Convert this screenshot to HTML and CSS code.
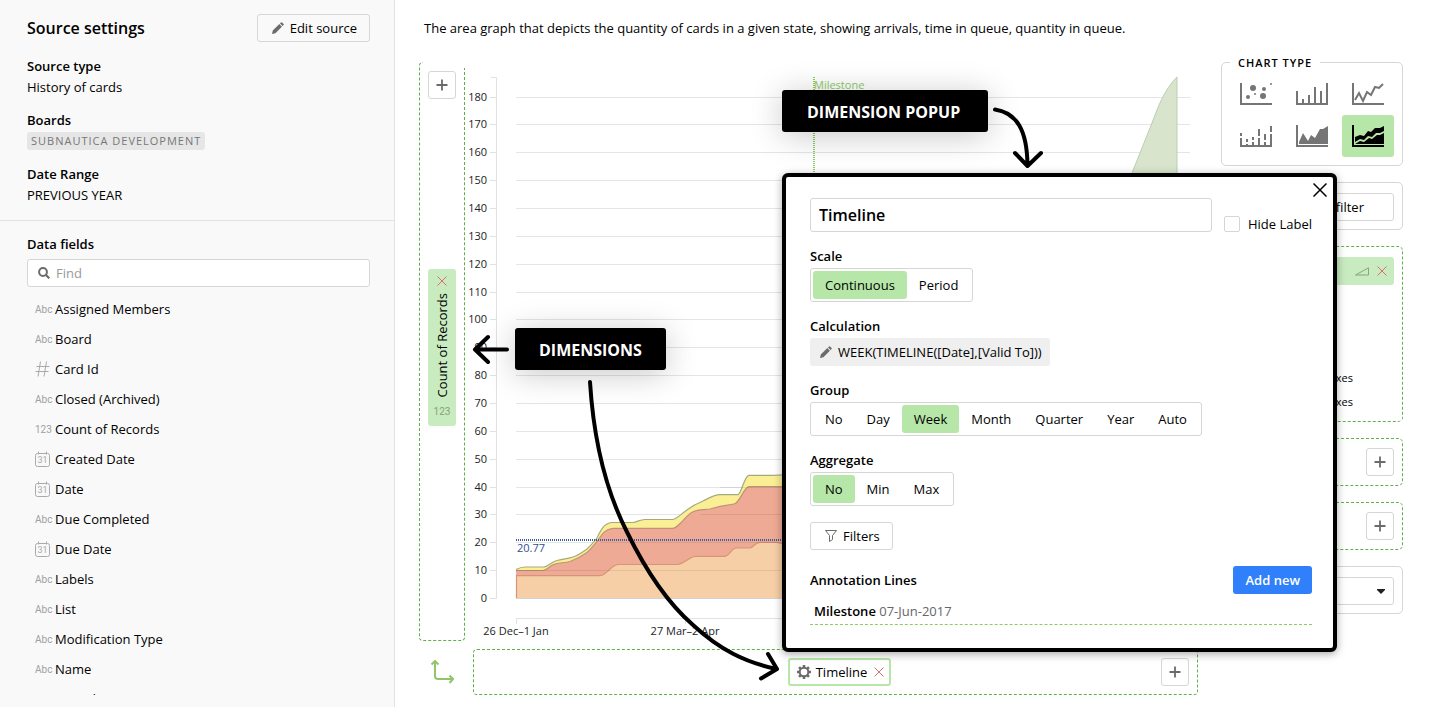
FILE: index.html
```html
<!DOCTYPE html>
<html lang="en">
<head>
<meta charset="utf-8">
<title>Chart editor</title>
<link rel="stylesheet" href="styles.css">
</head>
<body>
<svg class="sprite" aria-hidden="true">
  <symbol id="plus" viewBox="0 0 12 12"><path d="M6 0.500V11.500M0.500 6H11.500" fill="none" stroke="#6b6b6b" stroke-width="1.800"/></symbol>
  <symbol id="cross" viewBox="0 0 10 10"><path d="M0.500 0.500L9.500 9.500M9.500 0.500L0.500 9.500" fill="none" stroke="currentColor" stroke-width="1"/></symbol>
  <symbol id="pencil" viewBox="0 0 12 12"><path d="M0 12L0.800 8.600L7.300 2.100L9.900 4.700L3.400 11.200ZM8 1.400L9 0.400Q9.500 0 10 0.400L11.600 2Q12 2.500 11.600 3L10.600 4Z" fill="#6b6b6b"/></symbol>
  <symbol id="calendar" viewBox="0 0 15 16"><path d="M2.500 2.500H12.500Q14.500 2.500 14.500 4.500V13.500Q14.500 15.500 12.500 15.500H2.500Q0.500 15.500 0.500 13.500V4.500Q0.500 2.500 2.500 2.500ZM3.500 0.500V3.500M11.500 0.500V3.500" fill="none" stroke="#aaa"/><text x="7.500" y="12" text-anchor="middle" class="calendar-day">31</text></symbol>
  <symbol id="hash" viewBox="0 0 15 16"><path d="M5.500 0.500L3 15.500M11.500 0.500L9 15.500M1.500 5.500H14.500M0.500 10.500H13.500" fill="none" stroke="#aaa"/></symbol>
</svg>
<div class="app">
  <aside class="sidebar">
    <section class="source">
      <header class="source-head">
        <h1 class="title">Source settings</h1>
        <button class="btn" type="button"><svg class="i12"><use href="#pencil"/></svg>Edit source</button>
      </header>
      <dl class="facts">
        <dt>Source type</dt><dd>History of cards</dd>
        <dt>Boards</dt><dd><span class="tag">SUBNAUTICA DEVELOPMENT</span></dd>
        <dt>Date Range</dt><dd>PREVIOUS YEAR</dd>
      </dl>
    </section>
    <section class="fields">
      <label class="label-fields" for="find">Data fields</label>
      <div class="search">
        <svg class="i12" viewBox="0 0 12 12"><circle cx="5" cy="5" r="3.900" fill="none" stroke="#6b6b6b" stroke-width="2"/><path d="M8 8L11.300 11.300" stroke="#6b6b6b" stroke-width="2.200"/></svg>
        <input id="find" type="text" placeholder="Find">
      </div>
      <ul class="list">
        <li><span class="kind">Abc</span>Assigned Members</li>
        <li><span class="kind">Abc</span>Board</li>
        <li><svg class="kind"><use href="#hash"/></svg>Card Id</li>
        <li><span class="kind">Abc</span>Closed (Archived)</li>
        <li><span class="kind">123</span>Count of Records</li>
        <li><svg class="kind"><use href="#calendar"/></svg>Created Date</li>
        <li><svg class="kind"><use href="#calendar"/></svg>Date</li>
        <li><span class="kind">Abc</span>Due Completed</li>
        <li><svg class="kind"><use href="#calendar"/></svg>Due Date</li>
        <li><span class="kind">Abc</span>Labels</li>
        <li><span class="kind">Abc</span>List</li>
        <li><span class="kind">Abc</span>Modification Type</li>
        <li><span class="kind">Abc</span>Name</li>
        <li><span class="kind">Abc</span>Row Id</li>
      </ul>
    </section>
  </aside>

  <main class="main">
    <p class="description">The area graph that depicts the quantity of cards in a given state, showing arrivals, time in queue, quantity in queue.</p>
    <div class="workspace">
      <div class="canvas">
        <div class="zone zone-y">
          <button class="add" type="button" aria-label="Add Y dimension"><svg class="i12"><use href="#plus"/></svg></button>
          <div class="pill-y">
            <button class="remove" type="button" aria-label="Remove"><svg class="i10"><use href="#cross"/></svg></button>
            <span class="pill-text">Count of Records</span>
            <span class="kind">123</span>
          </div>
        </div>
        <svg class="chart" viewBox="473 62 725 579">
          <path class="grid" d="M516 97.500H1190M516 124.500H1190M516 152.500H1190M516 180.500H1190M516 208.500H1190M516 236.500H1190M516 264.500H1190M516 292.500H1190M516 319.500H1190M516 347.500H1190M516 375.500H1190M516 403.500H1190M516 431.500H1190M516 459.500H1190M516 487.500H1190M516 514.500H1190M516 542.500H1190M516 570.500H1190M516 598.500H1190"/>
          <path class="axis" d="M491 77.500H496.500V598.500H490M490 97.500H496M490 124.500H496M490 152.500H496M490 180.500H496M490 208.500H496M490 236.500H496M490 264.500H496M490 292.500H496M490 319.500H496M490 347.500H496M490 375.500H496M490 403.500H496M490 431.500H496M490 459.500H496M490 487.500H496M490 514.500H496M490 542.500H496M490 570.500H496M516.500 624V618.500H1190M685.500 618V624"/>
          <g class="ticks" text-anchor="end">
            <text x="487" y="101">180</text><text x="487" y="128">170</text><text x="487" y="156">160</text><text x="487" y="184">150</text><text x="487" y="212">140</text><text x="487" y="240">130</text><text x="487" y="268">120</text><text x="487" y="296">110</text><text x="487" y="323">100</text><text x="487" y="351">90</text><text x="487" y="379">80</text><text x="487" y="407">70</text><text x="487" y="435">60</text><text x="487" y="463">50</text><text x="487" y="491">40</text><text x="487" y="518">30</text><text x="487" y="546">20</text><text x="487" y="574">10</text><text x="487" y="602">0</text>
          </g>
          <g class="ticks" text-anchor="middle"><text x="516" y="635">26 Dec–1 Jan</text><text x="685" y="635">27 Mar–2 Apr</text></g>
          <path class="peak" d="M1105 250L1132 173L1152 123C1158 107 1164 90 1177 77V598H1105Z"/>
          <path fill="#faef94" d="M516 569.500C519 568 521 567 525 567H544C549 566 551 562 557 560.500C563 559 567 559 573 557C579 555 583 552 587 549C591 545 594 542 597 538C600 532 603 524 611 522.500H633C637 522 640 519.500 645 519.500H673C677 519 682 513 687 510C692 506 698 503 703 501C709 498 715 494.700 720 494.700H738C742 493 744 476 749 475.300H773L800 474V598H516Z"/>
          <path fill="#eeaa94" d="M516 570.500H543C548 570 550 565 555 564C560 562.500 565 563 570 561.500C577 559 582 556 587 552.500C591 549 594 545 597 541.500C601 536 604 529 613 528.300H673C677 528 679 524 682 521.700C686 517 690 513 693 511.700C698 509 704 510 710 509L720 506.300L734 504C740 503 743 488 749 486.700H800V598H516Z"/>
          <path fill="#f6cfa6" d="M516 575.700H600C607 575 611 565 618 564.500H677C684 564 689 557 695 556.300H725C729 556 732 548 736 548H750C754 547 755 542.300 760 542.300H777L800 548V598H516Z"/>
          <path class="edge" stroke="#a3ab7c" d="M516 569.500C519 568 521 567 525 567H544C549 566 551 562 557 560.500C563 559 567 559 573 557C579 555 583 552 587 549C591 545 594 542 597 538C600 532 603 524 611 522.500H633C637 522 640 519.500 645 519.500H673C677 519 682 513 687 510C692 506 698 503 703 501C709 498 715 494.700 720 494.700H738C742 493 744 476 749 475.300H773L800 474"/>
          <path class="edge" stroke="#bf9277" d="M516 570.500H543C548 570 550 565 555 564C560 562.500 565 563 570 561.500C577 559 582 556 587 552.500C591 549 594 545 597 541.500C601 536 604 529 613 528.300H673C677 528 679 524 682 521.700C686 517 690 513 693 511.700C698 509 704 510 710 509L720 506.300L734 504C740 503 743 488 749 486.700H800"/>
          <path class="edge" stroke="#d69478" d="M516.500 598V575.700H600C607 575 611 565 618 564.500H677C684 564 689 557 695 556.300H725C729 556 732 548 736 548H750C754 547 755 542.300 760 542.300H777L800 548"/>
          <path class="grid-over" d="M720 487.500H800M700 514.500H800M600 542.500H800M516 570.500H800M516 598.500H800"/>
          <path d="M516 540H800" stroke="#3c5a9c" stroke-width="2" stroke-dasharray="1 1"/>
          <text class="mean" x="517" y="552">20.77</text>
          <path d="M814 77V200" stroke="#8ccb66" stroke-width="2" stroke-dasharray="1 1"/>
          <text class="milestone" x="814" y="89">Milestone</text>
        </svg>
        <svg class="swap" viewBox="0 0 24 24"><path d="M5 1V16Q5 19 8 19H23M1.500 4.500L5 1L8.500 4.500M19.500 15.500L23 19L19.500 23" fill="none" stroke="#92c46c" stroke-width="2"/></svg>
        <div class="zone zone-x">
          <div class="chip">
            <svg class="gear" viewBox="0 0 14 14"><circle cx="7" cy="7" r="4.300" fill="none" stroke="#6b6b6b" stroke-width="2"/><path d="M7 0V2.500M7 11.500V14M0 7H2.500M11.500 7H14M2.050 2.050L3.800 3.800M10.200 10.200L11.950 11.950M2.050 11.950L3.800 10.200M10.200 3.800L11.950 2.050" stroke="#6b6b6b" stroke-width="2.600"/></svg>
            <span>Timeline</span>
            <button class="remove" type="button" aria-label="Remove"><svg class="i10"><use href="#cross"/></svg></button>
          </div>
          <button class="add" type="button" aria-label="Add X dimension"><svg class="i12"><use href="#plus"/></svg></button>
        </div>
      </div>

      <div class="panel">
        <fieldset class="types">
          <legend>CHART TYPE</legend>
          <button class="type" type="button" aria-label="Scatter"><svg viewBox="0 0 32 22"><path d="M1 0V21H32" class="frame"/><circle cx="13" cy="5" r="3"/><circle cx="24" cy="6" r="2"/><circle cx="31" cy="1" r="1"/><circle cx="8" cy="14" r="2"/><circle cx="15" cy="11" r="1"/><circle cx="23" cy="13" r="3"/></svg></button>
          <button class="type" type="button" aria-label="Bar"><svg viewBox="0 0 32 22"><path d="M1 8V21H31V0M7 21V16M13 21V12M19 21V4M25 21V8" class="frame"/></svg></button>
          <button class="type" type="button" aria-label="Line"><svg viewBox="0 0 32 22"><path d="M1 0V21H32M3 17L7 10L11 18L15 9L19 12L23 4L27 5L31 1" class="frame"/></svg></button>
          <button class="type" type="button" aria-label="Stacked bar"><svg viewBox="0 0 32 22"><path d="M1 21V13M1 11V8M0 21H32M7 21V19M7 17V14M13 21V17M13 15V12M19 21V13M19 11V4M25 21V17M25 15V9M31 21V9M31 7V1" class="frame"/></svg></button>
          <button class="type" type="button" aria-label="Area"><svg viewBox="0 0 32 22"><path d="M1 0V21H32" class="frame"/><path d="M3 18V17L7 8L12 16L15 10L19 13L24 4H27L32 1V19H3Z"/></svg></button>
          <button class="type selected" type="button" aria-label="Stacked area"><svg viewBox="0 0 32 22"><path d="M1 0V21H32" class="frame"/><path d="M3 12L8 10L12 11L16 6L19 7L23 3L28 3L32 1V6L28 8H24L20 12L16 11L12 15L8 14L3 17Z"/><path d="M3 19L8 16L12 17L17 13L20 14L25 10H28L32 8V19Z"/></svg></button>
        </fieldset>
        <div class="box"><button class="btn filter" type="button">Add filter</button></div>
        <div class="zone zone-color">
          <div class="pill-color">
            <svg class="wedge" viewBox="0 0 14 9"><path d="M0.500 8L13.500 0.800V8Z" fill="none" stroke="#87a57f"/></svg>
            <button class="remove" type="button" aria-label="Remove"><svg class="i10"><use href="#cross"/></svg></button>
          </div>
          <div class="axes"><span>Show axes</span><span>Sync axes</span></div>
        </div>
        <div class="zone zone-slim"><button class="add" type="button" aria-label="Add size"><svg class="i12"><use href="#plus"/></svg></button></div>
        <div class="zone zone-slim"><button class="add" type="button" aria-label="Add label"><svg class="i12"><use href="#plus"/></svg></button></div>
        <div class="box"><div class="select"><select aria-label="Options"><option></option></select><svg viewBox="0 0 8 5"><path d="M0 0H8V1L4 5L0 1Z" fill="#222"/></svg></div></div>
      </div>
    </div>

    <section class="popup">
      <button class="close" type="button" aria-label="Close"><svg viewBox="0 0 14 14"><path d="M0.500 0.500L13.500 13.500M13.500 0.500L0.500 13.500" stroke="#000" stroke-width="1.500"/></svg></button>
      <div class="name-row">
        <input class="name" type="text" value="Timeline" aria-label="Name">
        <label class="hide"><input type="checkbox">Hide Label</label>
      </div>
      <h2 class="label">Scale</h2>
      <div class="segments"><button class="selected" type="button">Continuous</button><button type="button">Period</button></div>
      <h2 class="label">Calculation</h2>
      <button class="formula" type="button"><svg class="i12"><use href="#pencil"/></svg>WEEK(TIMELINE([Date],[Valid To]))</button>
      <h2 class="label">Group</h2>
      <div class="segments"><button type="button">No</button><button type="button">Day</button><button class="selected" type="button">Week</button><button type="button">Month</button><button type="button">Quarter</button><button type="button">Year</button><button type="button">Auto</button></div>
      <h2 class="label">Aggregate</h2>
      <div class="segments"><button class="selected" type="button">No</button><button type="button">Min</button><button type="button">Max</button></div>
      <button class="btn filters" type="button"><svg class="i12" viewBox="0 0 12 12"><path d="M0.500 0.500H11.500L7.500 5.500V9.500L4.500 11.500V5.500Z" fill="none" stroke="#6b6b6b"/></svg>Filters</button>
      <div class="annotations"><h2>Annotation Lines</h2><button class="primary" type="button">Add new</button></div>
      <div class="annotation"><b>Milestone</b> 07-Jun-2017</div>
    </section>

    <div class="callout callout-dimensions">DIMENSIONS</div>
    <div class="callout callout-popup">DIMENSION POPUP</div>
    <svg class="arrows" viewBox="395 0 1039 707"><path d="M507 349.500H476M488 337L475 349.500L488 362M590 382C593 430 603 485 627 532C647 573 670 605 693 625C720 650 745 662 776 669M768 654L777 669L761 678.500M995 109.500C1017 113 1027 130 1027.500 165M1015 153L1027.500 166L1041 153"/></svg>
  </main>
</div>
</body>
</html>
```
FILE: styles.css
```css
* { box-sizing: border-box; }
body { margin: 0; background: #fff; color: #000; font: 13px/20px "Open Sans", "Noto Sans", sans-serif; }
button, input, select { font: inherit; color: inherit; margin: 0; padding: 0; border: 0; background: none; }
button { cursor: pointer; }
h1, h2, p, ul, dl, dd { margin: 0; padding: 0; }
svg { display: block; flex: none; }
.sprite { position: absolute; width: 0; height: 0; }
.i12 { width: 12px; height: 12px; }
.i10 { width: 10px; height: 10px; }
.app { display: grid; grid-template-columns: 395px minmax(0, 1fr); min-height: 100vh; }

.sidebar { display: flex; flex-direction: column; height: 100vh; padding-bottom: 12px; background: #f9f9f9; border-right: 1px solid #e2e2e2; }
.source { padding: 14px 24px 14px 27px; border-bottom: 1px solid #e2e2e2; }
.source-head { display: flex; justify-content: space-between; align-items: center; margin-bottom: 14px; }
.title { font-size: 16px; font-weight: 600; }
.btn { display: inline-flex; align-items: center; gap: 6px; height: 28px; padding: 0 12px 0 14px; border: 1px solid #d6d6d6; border-radius: 3px; }
.facts { line-height: 21px; }
.facts dt { font-weight: 600; }
.facts dd + dt { margin-top: 12px; }
.facts dd { height: 21px; }
.tag { display: inline-block; padding: 0 4px; border-radius: 3px; background: #e6e6e6; color: #777; font-size: 11px; font-weight: 500; line-height: 18px; letter-spacing: 1px; vertical-align: top; margin-top: 1px; }
.fields { display: flex; flex-direction: column; flex: 1; min-height: 0; padding: 12px 24px 0 27px; }
.label-fields { font-weight: 600; line-height: 22px; }
.search { display: flex; align-items: center; gap: 6px; flex: none; height: 28px; margin: 4px 0 7px; padding: 0 10px; background: #fff; border: 1px solid #d6d6d6; border-radius: 3px; }
.search input { flex: 1; min-width: 0; outline: 0; }
.search input::placeholder { color: #999; opacity: 1; }
.list { list-style: none; flex: 1; min-height: 0; overflow: hidden; }
.list li { display: flex; align-items: center; gap: 5px; height: 30px; padding-left: 8px; }
.kind { width: 15px; height: 16px; color: #a0a0a0; font-family: Roboto, sans-serif; line-height: 16px; flex: none; }
span.kind { font-size: 10px; line-height: 18px; white-space: nowrap; }
.calendar-day { font: 9px Roboto, sans-serif; fill: #aaa; }

.main { position: relative; padding: 14px 31px 12px 24px; }
.description { padding-left: 5px; line-height: 28px; margin-bottom: 20px; }
.workspace { display: flex; align-items: flex-start; gap: 23px; }
.canvas { flex: 1; min-width: 0; display: grid; grid-template-columns: 46px minmax(0, 1fr); gap: 8px; }
.zone { border: 1px dashed #5fb04c; border-radius: 4px; }
.zone-y { position: relative; display: grid; grid-template-rows: 28px 1fr 28px; justify-items: center; align-items: center; padding: 8px 0 16px; }
.zone-y::before { content: ""; position: absolute; top: -1px; left: 3px; right: -1px; height: 6px; background: #fff; }
.add { display: flex; align-items: center; justify-content: center; width: 28px; height: 28px; background: #fff; border: 1px solid #d6d6d6; border-radius: 3px; }
.remove { color: #d9706c; }
.pill-y { display: flex; flex-direction: column; align-items: center; gap: 7px; width: 28px; padding: 7px 0 5px; background: #c9ebc0; border-radius: 3px; }
.pill-y .kind { color: #86a080; width: auto; line-height: 14px; }
.pill-text { writing-mode: vertical-rl; transform: rotate(180deg); }
.chart { width: 100%; height: auto; overflow: visible; }
.grid, .axis { fill: none; stroke: #e3e5e8; }
.axis { stroke: #dfe1e5; }
.grid-over { fill: none; stroke: #000; stroke-opacity: .08; }
.ticks { font-size: 11px; fill: #222; }
.peak { fill: #d8e5cc; stroke: #bccdb4; }
.edge { fill: none; stroke-width: 1.2; }
.mean { font-size: 11px; fill: #34508f; }
.milestone { font-size: 11px; font-weight: 500; fill: #8ccb66; }
.swap { width: 24px; height: 24px; align-self: center; justify-self: center; }
.zone-x { display: grid; grid-template-columns: 28px 1fr 28px; justify-items: center; align-items: center; padding: 8px 8px 8px 16px; }
.chip { grid-column: 2; display: flex; align-items: center; gap: 5px; height: 28px; padding: 0 5px 0 7px; background: #fff; border: 2px solid #b6e6a8; border-radius: 3px; }
.chip .remove { margin-left: 2px; }
.gear { width: 14px; height: 14px; }

.panel { flex: none; width: 182px; display: flex; flex-direction: column; gap: 16px; margin-top: -8px; }
.types { display: grid; grid-template-columns: repeat(3, 52px); column-gap: 4px; margin: 0; min-width: 0; padding: 2px 8px 8px; border: 1px solid #d6d6d6; border-radius: 5px; }
.types legend { padding: 0 8px; font-size: 11px; font-weight: 600; line-height: 17px; letter-spacing: 1px; }
.type { display: flex; align-items: center; justify-content: center; height: 42px; border-radius: 3px; fill: #757575; stroke: #757575; }
.type svg { width: 32px; height: 22px; stroke: none; }
.frame { fill: none; stroke: #757575; stroke-width: 2; }
.type.selected { background: #b6e6a8; fill: #000; }
.selected .frame { stroke: #000; }
.box { padding: 10px 8px 8px; border: 1px solid #d6d6d6; border-radius: 5px; }
.filter { width: 100%; justify-content: flex-end; padding-right: 29px; }
.zone-color { padding: 10px 8px 7px; border-radius: 5px; }
.pill-color { display: flex; align-items: center; justify-content: flex-end; gap: 8px; height: 28px; padding: 0 7px; background: #c9ebc0; border-radius: 3px; }
.wedge { width: 14px; height: 9px; }
.axes { display: flex; flex-direction: column; align-items: flex-end; padding: 81px 41px 0 0; font-size: 11px; line-height: 24px; }
.zone-slim { display: flex; justify-content: flex-end; padding: 9px 8px; border-radius: 5px; }
.select { display: flex; align-items: center; height: 28px; padding-right: 8px; border: 1px solid #d6d6d6; border-radius: 3px; }
.select select { flex: 1; appearance: none; }
.select svg { width: 8px; height: 5px; }

.popup { position: absolute; top: 173px; right: 97px; width: 555px; padding: 21px 21px 23px 24px; background: #fff; border: 4px solid #000; border-radius: 6px; box-shadow: 0 2px 8px rgba(0, 0, 0, .35); }
.close { position: absolute; top: 6px; right: 6px; width: 14px; height: 14px; }
.name-row { display: flex; align-items: flex-end; gap: 12px; }
.name { flex: 1; min-width: 0; height: 34px; padding: 0 8px; border: 1px solid #d6d6d6; border-radius: 3px; font-size: 16px; font-weight: 600; }
.hide { display: flex; align-items: center; gap: 8px; line-height: 16px; }
.hide input { appearance: none; width: 16px; height: 16px; border: 1px solid #d6d6d6; border-radius: 2px; }
.label { margin-top: 12px; font-size: 13px; font-weight: 600; line-height: 24px; }
.segments { display: flex; width: fit-content; padding: 2px; border: 1px solid #d6d6d6; border-radius: 3px; }
.segments button { height: 28px; padding: 0 12px; border-radius: 3px; }
.segments .selected { background: #b6e6a8; }
.formula { display: flex; align-items: center; gap: 6px; height: 28px; padding: 0 8px 0 10px; background: #efefef; border-radius: 3px; }
.filters { display: flex; margin-top: 16px; }
.annotations { display: flex; align-items: center; justify-content: space-between; margin-top: 16px; }
.annotations h2 { font-size: 13px; font-weight: 600; }
.primary { height: 28px; padding: 0 12px; background: #2f80fa; border-radius: 3px; color: #fff; font-weight: 600; }
.annotation { margin-top: 4px; padding-left: 4px; line-height: 26px; color: #666; border-bottom: 1px dashed #8ccb66; }
.annotation b { font-weight: 600; color: #000; }

.callout { position: absolute; height: 42px; padding: 0 24px; background: #000; border-radius: 3px; color: #fff; font-size: 16px; font-weight: 700; line-height: 44px; white-space: nowrap; box-shadow: 0 4px 32px rgba(0, 0, 0, .22); }
.callout-dimensions { left: 120px; top: 328px; }
.callout-popup { left: 387px; top: 90px; padding: 0 28px 0 25px; }
.arrows { position: absolute; left: 0; top: 0; width: 100%; height: auto; pointer-events: none; fill: none; stroke: #000; stroke-width: 4; stroke-linecap: round; stroke-linejoin: round; }
```
